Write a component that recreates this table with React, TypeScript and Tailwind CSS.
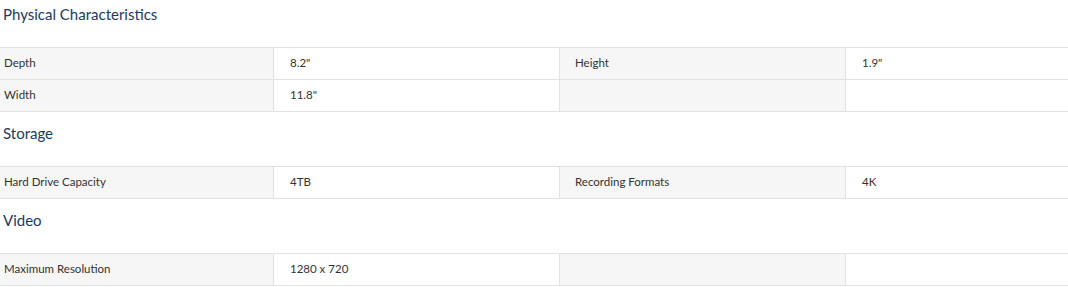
const sections: { title: string; rows: [string, string, string, string][] }[] = [
  {
    title: "Physical Characteristics",
    rows: [
      ["Depth", "8.2\"", "Height", "1.9\""],
      ["Width", "11.8\"", "", ""],
    ],
  },
  {
    title: "Storage",
    rows: [["Hard Drive Capacity", "4TB", "Recording Formats", "4K"]],
  },
  {
    title: "Video",
    rows: [["Maximum Resolution", "1280 x 720", "", ""]],
  },
];

const App = () => {
  return (
    <div className="w-[1068px] bg-white font-['Lato','Noto_Sans',sans-serif] text-[#333]">
      {sections.map((s) => (
        <div key={s.title} className="mb-[7px]">
          <h2 className="h-[47px] pl-[3px] pt-[3px] text-[15px] leading-[22px] font-normal text-[#1b3a5e]">{s.title}</h2>
          <div className="grid grid-cols-[274px_286px_286px_1fr] border-t border-[#e2e2e2] text-[11.5px]">
            {s.rows.map((r, i) => (
              <div key={i} className="contents">
                <div className="flex h-[32px] items-center border-r border-b border-[#e2e2e2] bg-[#f6f6f6] pb-[1px] pl-[4px]">{r[0]}</div>
                <div className="flex h-[32px] items-center border-r border-b border-[#e2e2e2] pb-[1px] pl-[16px]">{r[1]}</div>
                <div className="flex h-[32px] items-center border-r border-b border-[#e2e2e2] bg-[#f6f6f6] pb-[1px] pl-[15px]">{r[2]}</div>
                <div className="flex h-[32px] items-center border-b border-[#e2e2e2] pb-[1px] pl-[16px]">{r[3]}</div>
              </div>
            ))}
          </div>
        </div>
      ))}
    </div>
  );
};

export default App;
